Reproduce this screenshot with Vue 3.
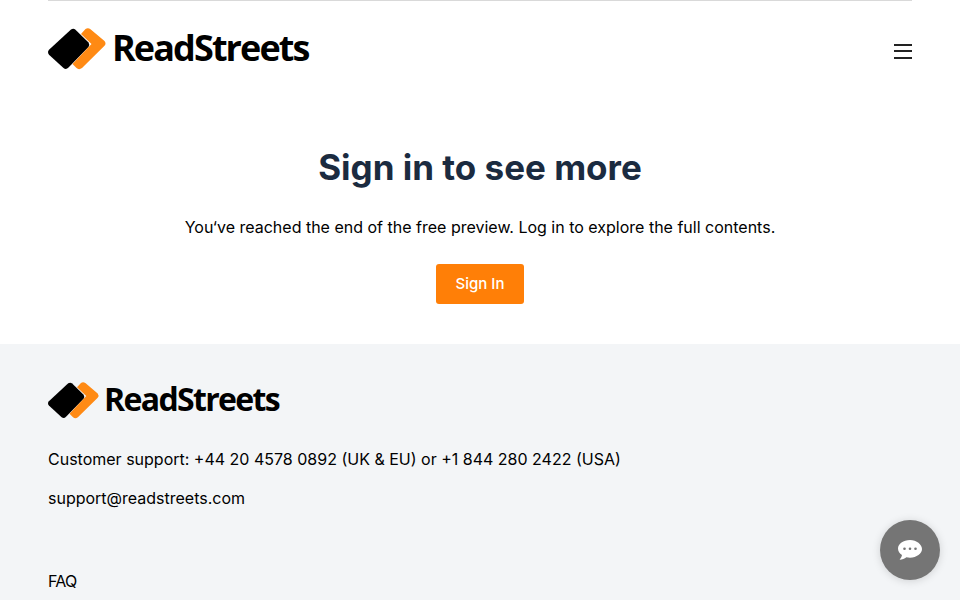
<script setup>
const footerLinks = ['FAQ']
</script>

<template>
  <div class="page">
    <div class="wrap">
      <header class="topbar">
        <a class="logo">
          <svg class="mark" width="58" height="42" viewBox="0 0 58 42">
            <path d="M23 1.500 Q25.500 0 27.500 1.800 L40.500 14.500 Q42 17 40.500 19 L20.500 39.500 Q18 42 15.500 40 L1 26.800 Q-1 24 1 21.800 Z" fill="#000" />
            <path d="M37.500 1 Q40 -0.500 42.500 1.200 L56.500 13 Q58.500 15.500 56.500 17.800 L34 40 Q31 42.300 28.500 40 L24.500 36 L43.500 16 L33 6 Z" fill="#ff8a14" />
          </svg>
          <span class="wordmark">ReadStreets</span>
        </a>
        <button class="burger" aria-label="Menu">
          <span></span><span></span><span></span>
        </button>
      </header>
    </div>

    <main class="gate">
      <h1>Sign in to see more</h1>
      <p>You‘ve reached the end of the free preview. Log in to explore the full contents.</p>
      <button class="signin">Sign In</button>
    </main>

    <footer class="foot">
      <a class="logo small">
        <svg class="mark" width="51" height="37" viewBox="0 0 58 42">
          <path d="M23 1.500 Q25.500 0 27.500 1.800 L40.500 14.500 Q42 17 40.500 19 L20.500 39.500 Q18 42 15.500 40 L1 26.800 Q-1 24 1 21.800 Z" fill="#000" />
          <path d="M37.500 1 Q40 -0.500 42.500 1.200 L56.500 13 Q58.500 15.500 56.500 17.800 L34 40 Q31 42.300 28.500 40 L24.500 36 L43.500 16 L33 6 Z" fill="#ff8a14" />
        </svg>
        <span class="wordmark">ReadStreets</span>
      </a>
      <p class="line">Customer support: +44 20 4578 0892 (UK &amp; EU) or +1 844 280 2422 (USA)</p>
      <p class="line mail">support@readstreets.com</p>
      <ul class="links">
        <li v-for="link in footerLinks" :key="link">{{ link }}</li>
      </ul>
    </footer>

    <button class="chat" aria-label="Chat">
      <svg width="26" height="22" viewBox="0 0 26 22">
        <path d="M13 1C6.400 1 1 4.800 1 9.600c0 2.600 1.600 4.900 4 6.500-.3 1.700-1.200 3.300-2.400 4.600 2.600-.2 5-1.100 6.800-2.500 1.100.3 2.400.5 3.600.5 6.600 0 12-3.900 12-8.600S19.600 1 13 1Z" fill="#fff" />
        <circle cx="7.500" cy="9.800" r="1.300" fill="#757575" />
        <circle cx="13" cy="9.800" r="1.300" fill="#757575" />
        <circle cx="18.500" cy="9.800" r="1.300" fill="#757575" />
      </svg>
    </button>
  </div>
</template>

<style>
html, body {
  margin: 0;
  height: 600px;
  overflow: hidden;
  background: #fff;
}
</style>

<style scoped>
.page {
  font-family: Inter, "Liberation Sans", sans-serif;
  color: #000;
  height: 600px;
  overflow: hidden;
}
.wrap {
  padding: 0 48px;
}
.topbar {
  border-top: 1px solid #d9d9d9;
  display: flex;
  align-items: center;
  justify-content: space-between;
  height: 95px;
}
.logo {
  display: flex;
  align-items: center;
  gap: 6px;
}
.mark {
  flex: none;
  overflow: visible;
}
.wordmark {
  font-family: "Open Sans", sans-serif;
  font-weight: 700;
  font-size: 36px;
  line-height: 44px;
  letter-spacing: -1.9px;
  color: #000;
  position: relative;
  top: -1px;
}
.burger {
  width: 18px;
  height: 15px;
  padding: 0;
  margin-top: 5px;
  border: 0;
  background: none;
  display: flex;
  flex-direction: column;
  justify-content: space-between;
}
.burger span {
  display: block;
  height: 2px;
  background: #222;
}
.gate {
  height: 248px;
  box-sizing: border-box;
  padding-top: 47px;
  text-align: center;
}
.gate h1 {
  margin: 0;
  font-size: 35px;
  line-height: 48px;
  font-weight: 700;
  color: #1b2b40;
}
.gate p {
  margin: 24px 0 0;
  font-size: 16px;
  line-height: 24px;
}
.signin {
  margin-top: 25px;
  width: 88px;
  height: 40px;
  padding: 0 0 2px;
  border: 0;
  border-radius: 3px;
  background: #ff7f07;
  color: #fff;
  font-family: inherit;
  font-size: 15px;
  font-weight: 500;
}
.foot {
  background: #f3f5f7;
  height: 256px;
  box-sizing: border-box;
  padding: 37px 48px 0;
}
.foot .wordmark {
  font-size: 32px;
  line-height: 38px;
  letter-spacing: -1.650px;
}
.foot .logo {
  gap: 5px;
}
.line {
  margin: 28px 0 0;
  font-size: 16px;
  line-height: 24px;
}
.mail {
  margin-top: 15px;
}
.links {
  list-style: none;
  margin: 59px 0 0;
  padding: 0;
  font-size: 16px;
  line-height: 24px;
  letter-spacing: -0.800px;
}
.chat {
  position: fixed;
  right: 20px;
  bottom: 20px;
  width: 60px;
  height: 60px;
  border: 0;
  border-radius: 50%;
  background: #757575;
  box-shadow: 0 1px 8px rgba(0, 0, 0, 0.15);
  display: flex;
  align-items: center;
  justify-content: center;
  padding: 0;
}
</style>
